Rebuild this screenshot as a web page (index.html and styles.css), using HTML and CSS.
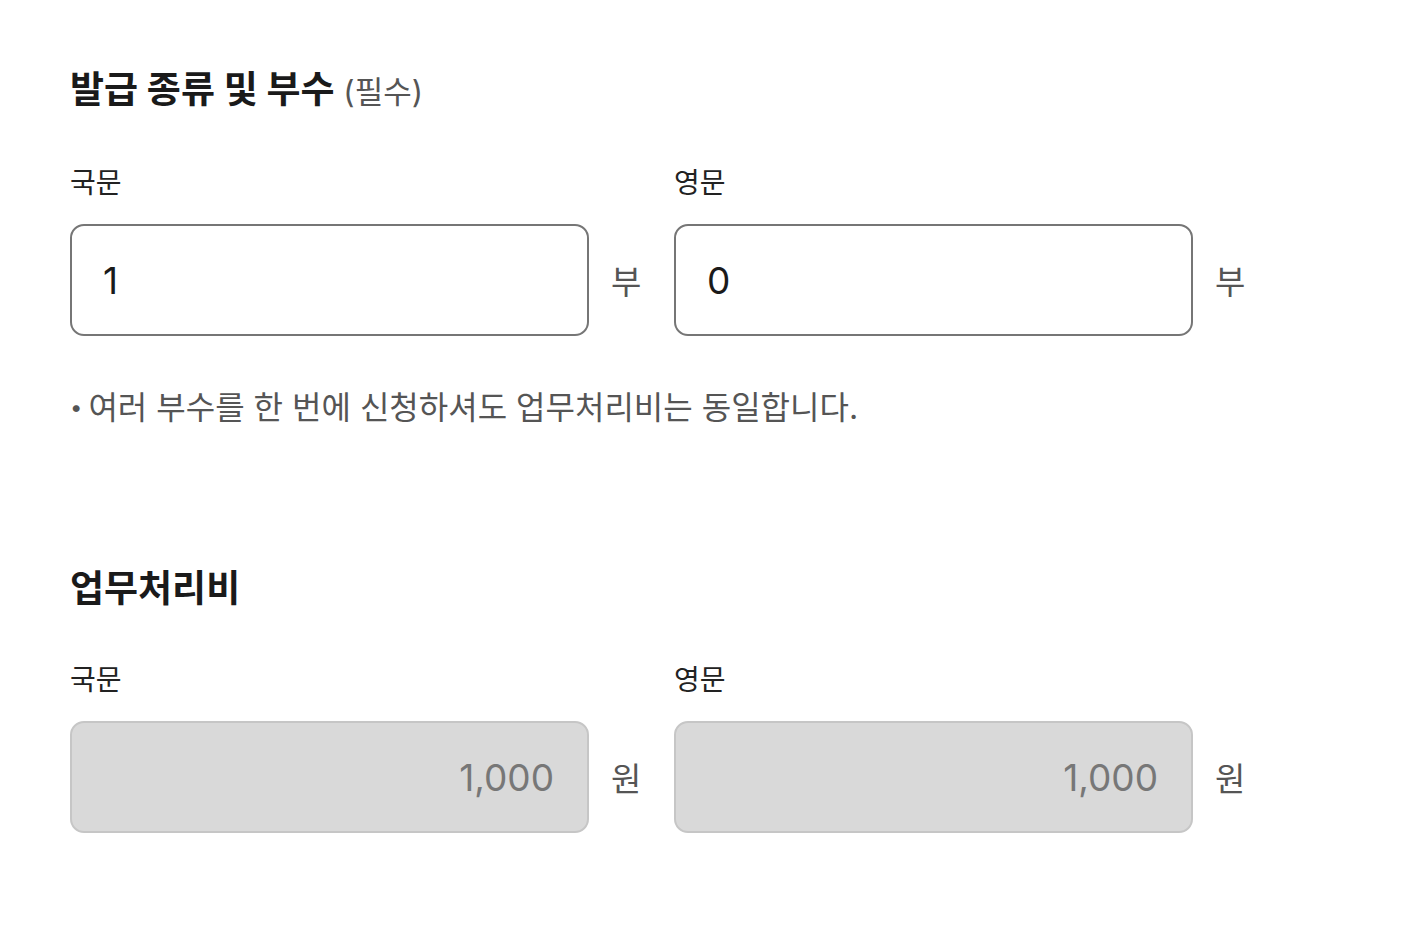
FILE: index.html
```html
<!DOCTYPE html>
<html lang="ko">
<head>
<meta charset="utf-8">
<title>발급 종류 및 부수</title>
<link rel="stylesheet" href="styles.css">
</head>
<body>
<main class="page">
  <section class="section">
    <h2 class="title">발급 종류 및 부수 <span class="req">(필수)</span></h2>
    <div class="fields">
      <div class="field">
        <label class="label" for="kr">국문</label>
        <div class="input-row">
          <input class="input" id="kr" type="text" value="1">
          <span class="unit">부</span>
        </div>
      </div>
      <div class="field">
        <label class="label" for="en">영문</label>
        <div class="input-row">
          <input class="input" id="en" type="text" value="0">
          <span class="unit">부</span>
        </div>
      </div>
    </div>
    <p class="note"><span class="dot">•</span>여러 부수를 한 번에 신청하셔도 업무처리비는 동일합니다.</p>
  </section>
  <section class="section second">
    <h2 class="title">업무처리비</h2>
    <div class="fields">
      <div class="field">
        <label class="label" for="krfee">국문</label>
        <div class="input-row">
          <input class="input readonly" id="krfee" type="text" value="1,000" readonly>
          <span class="unit">원</span>
        </div>
      </div>
      <div class="field">
        <label class="label" for="enfee">영문</label>
        <div class="input-row">
          <input class="input readonly" id="enfee" type="text" value="1,000" readonly>
          <span class="unit">원</span>
        </div>
      </div>
    </div>
  </section>
</main>
</body>
</html>
```

FILE: styles.css
```css
* { box-sizing: border-box; }
html, body { margin: 0; padding: 0; background: #fff; }
body {
  font-family: Inter, "Noto Sans CJK KR", "Noto Sans", sans-serif;
  color: #1a1a1a;
}
.page { padding: 63px 70px 0; }
.title {
  margin: 0;
  font-size: 37px;
  line-height: 54px;
  font-weight: 700;
  color: #1a1a1a;
}
.req {
  font-size: 31px;
  font-weight: 400;
  color: #555;
}
.fields {
  display: flex;
  margin-top: 44px;
}
.field {
  width: 604px;
  display: flex;
  flex-direction: column;
}
.label {
  font-size: 28px;
  line-height: 40px;
  color: #222;
  margin-bottom: 21px;
}
.input-row {
  display: flex;
  align-items: center;
  gap: 22px;
}
.input {
  width: 519px;
  height: 112px;
  border: 2px solid #767676;
  border-radius: 14px;
  padding: 0 31px;
  font-family: Inter, "Noto Sans CJK KR", sans-serif;
  font-size: 37px;
  color: #1a1a1a;
  background: #fff;
  outline: none;
}
.input.readonly {
  background: #d9d9d9;
  border-color: #c6c6c6;
  color: #777;
  text-align: right;
  padding-right: 33px;
}
.unit {
  font-size: 33px;
  color: #555;
}
.note {
  margin: 51px 0 0;
  font-size: 32px;
  line-height: 40px;
  color: #555;
}
.dot {
  font-size: 22px;
  margin-right: 6px;
  vertical-align: 4px;
}
.second { margin-top: 134px; }
```
